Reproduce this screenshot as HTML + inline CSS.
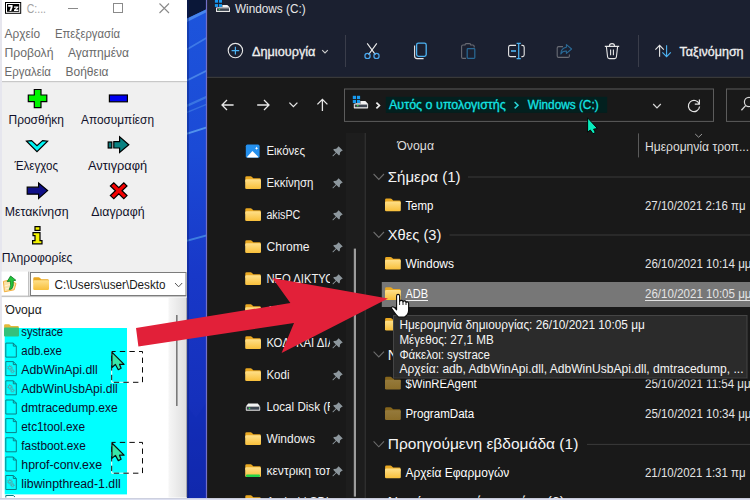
<!DOCTYPE html>
<html lang="el"><head><meta charset="utf-8"><title>7-Zip / Windows (C:)</title>
<style>html,body{margin:0;padding:0;background:#191919;overflow:hidden}svg{display:block}text{font-family:"Liberation Sans",sans-serif;white-space:pre}</style></head><body>
<svg width="750" height="500" viewBox="0 0 750 500">
<defs>
<linearGradient id="fg" x1="0" y1="0" x2="0" y2="1"><stop offset="0" stop-color="#ffe08a"/><stop offset="1" stop-color="#f8bf3a"/></linearGradient>
<linearGradient id="fgd" x1="0" y1="0" x2="0" y2="1"><stop offset="0" stop-color="#957a3c"/><stop offset="1" stop-color="#8c6e2a"/></linearGradient>
<linearGradient id="sbg" x1="0" y1="0" x2="1" y2="0"><stop offset="0" stop-color="#f6f6f6"/><stop offset="1" stop-color="#dedede"/></linearGradient>
<linearGradient id="wall" x1="0" y1="0" x2="0" y2="1"><stop offset="0" stop-color="#1d55dc"/><stop offset="0.3" stop-color="#1b4ad6"/><stop offset="0.55" stop-color="#1838c8"/><stop offset="0.8" stop-color="#1530bc"/><stop offset="1" stop-color="#1226a8"/></linearGradient>
<g id="folder"><path d="M0.3 1.6 Q0.3 0.3 1.6 0.3 L5.6 0.3 Q6.4 0.3 7 0.9 L8.3 2.2 L14.6 2.2 Q15.8 2.2 15.8 3.4 L15.8 6 L0.3 6 Z" fill="#e9a822"/><rect x="0.2" y="3.2" width="15.8" height="9.8" rx="1.3" fill="url(#fg)"/></g>
<g id="folderd"><path d="M0.3 1.6 Q0.3 0.3 1.6 0.3 L5.6 0.3 Q6.4 0.3 7 0.9 L8.3 2.2 L14.6 2.2 Q15.8 2.2 15.8 3.4 L15.8 6 L0.3 6 Z" fill="#85651c"/><rect x="0.2" y="3.2" width="15.8" height="9.8" rx="1.3" fill="url(#fgd)"/></g>
<g id="pin"><path d="M6.2 0.6 L10.4 4.8 L9.2 5.4 L7.6 7 L7.4 9.2 L6.6 10 L4 7.4 L0.8 10.6 L0.2 10.6 L0.2 10 L3.4 6.8 L0.8 4.2 L1.6 3.4 L3.8 3.2 L5.4 1.6 Z" fill="#8d979d"/></g>
<g id="fileico"><path d="M0.5 0.5 L8 0.5 L11 3.5 L11 14.5 L0.5 14.5 Z" fill="#00ffff" stroke="#0a7f86" stroke-width="1"/><path d="M8 0.5 L8 3.5 L11 3.5" fill="none" stroke="#0a7f86" stroke-width="1"/></g>
<g id="dllico"><use href="#fileico"/><circle cx="4.6" cy="6.6" r="1.5" fill="none" stroke="#5f9da2" stroke-width="1"/><circle cx="4.6" cy="6.6" r="2.4" fill="none" stroke="#5f9da2" stroke-width="0.9" stroke-dasharray="0.95 0.93"/><circle cx="7.2" cy="10.2" r="1.1" fill="none" stroke="#5f9da2" stroke-width="0.9"/><circle cx="7.2" cy="10.2" r="1.9" fill="none" stroke="#5f9da2" stroke-width="0.8" stroke-dasharray="0.75 0.74"/></g>
<g id="cur"><path d="M0 0 L0 15.4 L3.5 12.4 L6.4 17.6 L9.2 16.2 L7.6 12.2 L12.2 12.2 Z" fill="#36e6a8" stroke="#07140f" stroke-width="1.2" stroke-linejoin="round"/></g>
</defs>
<rect x="0" y="0" width="750" height="500" fill="#191919"/>
<rect x="186" y="0" width="22" height="500" fill="url(#wall)"/>
<path d="M186 0 L208 0 L208 8.5 L186 19 Z" fill="#0a1738"/><path d="M186 19 L208 8.5 L208 11.5 L186 22.5 Z" fill="#4f8ef0" opacity="0.85"/>
<path d="M186 49 L208 36 L208 38 L186 51 Z" fill="#4d8cec" opacity="0.7"/>
<path d="M186 80 L208 69 L208 71 L186 82 Z" fill="#5a98ee" opacity="0.7"/>
<path d="M186 105 L208 95 L208 97.5 L186 107.5 Z" fill="#4f90ea" opacity="0.6"/>
<path d="M186 112 L208 103 L208 104.5 L186 113.5 Z" fill="#4f90ea" opacity="0.5"/>
<path d="M186 133 L208 126 L208 128 L186 135 Z" fill="#5fa4f0" opacity="0.8"/>
<path d="M186 240 L208 234 L208 236 L186 242 Z" fill="#4f9ae8" opacity="0.7"/>
<path d="M186 405 L196 418 L208 400 L208 500 L186 500 Z" fill="#0f2cb4" opacity="0.35"/>
<rect x="186" y="0" width="3" height="500" fill="#0a1a60" opacity="0.35"/>
<rect x="0" y="0" width="187" height="498.2" fill="#ffffff"/>
<rect x="0" y="82" width="187" height="216" fill="#f0f0f0"/>
<rect x="0" y="81" width="187" height="1.2" fill="#c8c8c8"/>
<rect x="0" y="0" width="2" height="498" fill="#e6e6ee"/>
<rect x="5" y="2" width="16.2" height="11.8" fill="#000"/><rect x="6" y="3" width="14.2" height="9.8" fill="#fff"/><rect x="7" y="4" width="12.2" height="7.8" fill="#000"/>
<path d="M8.2 5 L12.6 5 L12.6 7.2 L11.2 11 L9.4 11 L10.8 6.8 L8.2 6.8 Z" fill="#fff"/>
<path d="M14 6.4 L18.4 6.4 L18.4 7.6 L16 9.6 L18.4 9.6 L18.4 11 L14 11 L14 9.8 L16.4 7.8 L14 7.8 Z" fill="#fff"/>
<text x="26.8" y="12.6" font-size="12" fill="#a2a2a2" textLength="19.2" lengthAdjust="spacingAndGlyphs">C:...</text>
<path d="M68 8.5 L78 8.5" stroke="#8a8a8a" stroke-width="1"/>
<rect x="113.5" y="3.5" width="9" height="9" fill="none" stroke="#8a8a8a" stroke-width="1"/>
<path d="M159.5 3.5 L169 13 M169 3.5 L159.5 13" stroke="#8a8a8a" stroke-width="1.1"/>
<text x="4.5" y="38.2" font-size="12" fill="#6a6a6a" textLength="35.5" lengthAdjust="spacingAndGlyphs">Αρχείο</text>
<text x="55.0" y="38.2" font-size="12" fill="#6a6a6a" textLength="65.0" lengthAdjust="spacingAndGlyphs">Επεξεργασία</text>
<text x="4.5" y="56.5" font-size="12" fill="#6a6a6a" textLength="49.0" lengthAdjust="spacingAndGlyphs">Προβολή</text>
<text x="68.0" y="56.5" font-size="12" fill="#6a6a6a" textLength="61.0" lengthAdjust="spacingAndGlyphs">Αγαπημένα</text>
<text x="4.5" y="75.6" font-size="12" fill="#6a6a6a" textLength="46.5" lengthAdjust="spacingAndGlyphs">Εργαλεία</text>
<text x="65.5" y="75.6" font-size="12" fill="#6a6a6a" textLength="43.0" lengthAdjust="spacingAndGlyphs">Βοήθεια</text>
<path d="M34.3 89.5 L41 89.5 L41 95 L46.8 95 L46.8 101.6 L41 101.6 L41 107.6 L34.3 107.6 L34.3 101.6 L28.3 101.6 L28.3 95 L34.3 95 Z" fill="#00f400" stroke="#000" stroke-width="1.2" stroke-linejoin="miter"/>
<rect x="109.4" y="95" width="18" height="6.8" fill="#0000f0" stroke="#000" stroke-width="1.2" stroke-linejoin="miter"/>
<path d="M26.5 141.2 L31.6 140.6 L37 145.6 L42.6 140.6 L47.6 141.2 L37 151.6 Z" fill="#00f6f6" stroke="#000" stroke-width="1.2" stroke-linejoin="miter"/>
<rect x="108.2" y="142" width="3.6" height="6" fill="#0a7a7a" stroke="#000" stroke-width="1.2" stroke-linejoin="miter"/>
<path d="M113.8 141.6 L119.6 141.6 L119.6 136.8 L128.8 144.8 L119.6 152.4 L119.6 148 L113.8 148 Z" fill="#0a8282" stroke="#000" stroke-width="1.2" stroke-linejoin="miter"/>
<path d="M27.2 187.2 L38.6 187.2 L38.6 183 L47.6 190.6 L38.6 198.4 L38.6 194.2 L27.2 194.2 Z" fill="#101088" stroke="#000" stroke-width="1.2" stroke-linejoin="miter"/>
<path d="M110.4 186 L113.8 182.8 L118.8 187.6 L123.8 182.8 L127 186 L122 190.8 L127 195.6 L123.8 198.6 L118.8 193.8 L113.8 198.6 L110.4 195.6 L115.4 190.8 Z" fill="#f40000" stroke="#000" stroke-width="1.2" stroke-linejoin="miter"/>
<path d="M35 226.6 L40 226.6 L40 230.4 L35 230.4 Z M33 232.6 L40 232.6 L40 240.6 L42 240.6 L42 243.8 L32.6 243.8 L32.6 240.6 L35 240.6 L35 235.6 L33 235.6 Z" fill="#f4f400" stroke="#000" stroke-width="1.2" stroke-linejoin="miter"/>
<text x="8.5" y="124.2" font-size="12.5" fill="#10102a" textLength="55.5" lengthAdjust="spacingAndGlyphs">Προσθήκη</text>
<text x="81.0" y="124.2" font-size="12.5" fill="#10102a" textLength="73.0" lengthAdjust="spacingAndGlyphs">Αποσυμπίεση</text>
<text x="14.5" y="169.6" font-size="12.5" fill="#10102a" textLength="43.5" lengthAdjust="spacingAndGlyphs">Έλεγχος</text>
<text x="88.0" y="169.6" font-size="12.5" fill="#10102a" textLength="59.2" lengthAdjust="spacingAndGlyphs">Αντιγραφή</text>
<text x="4.7" y="216.3" font-size="12.5" fill="#10102a" textLength="64.0" lengthAdjust="spacingAndGlyphs">Μετακίνηση</text>
<text x="91.3" y="216.3" font-size="12.5" fill="#10102a" textLength="53.3" lengthAdjust="spacingAndGlyphs">Διαγραφή</text>
<text x="1.7" y="262.2" font-size="12.5" fill="#10102a" textLength="70.8" lengthAdjust="spacingAndGlyphs">Πληροφορίες</text>
<rect x="1.6" y="271.6" width="27" height="24.6" fill="#ffffff"/><rect x="28.2" y="271.6" width="1" height="25" fill="#b4b4b4"/><rect x="1.6" y="295.6" width="185" height="1.2" fill="#b8b8b8"/>
<path d="M3.4 281.4 L8.6 280.2 L16 283.4 L14.2 289.8 L4.4 291.8 Z" fill="#fbe2a6" stroke="#f0a830" stroke-width="0.9" stroke-linejoin="round"/><path d="M4.6 286 L13 283.6 M5.4 289 L13.6 286.6" stroke="#fff4d8" stroke-width="1"/>
<path d="M9.2 289.6 Q11.4 286 10.4 281.2 L7.2 281.6 L10.6 276 L15.8 280.2 L13.2 280.8 Q14 286.4 11.6 289 Z" fill="#22c43c" stroke="#0c7a20" stroke-width="0.8" stroke-linejoin="round"/>
<rect x="30.5" y="272.5" width="155.5" height="23" fill="#fff" stroke="#7c7c7c" stroke-width="1"/>
<use href="#folder" x="33" y="277"/>
<text x="54.5" y="289.4" font-size="12.5" fill="#1a1a1a" textLength="111.0" lengthAdjust="spacingAndGlyphs">C:\Users\user\Deskto</text>
<path d="M175 283 L178.6 286.8 L182.2 283" fill="none" stroke="#555" stroke-width="1"/>
<rect x="2" y="297.5" width="185" height="200" fill="#ffffff"/>
<rect x="168.5" y="297.5" width="18" height="200" fill="url(#sbg)"/><rect x="186.3" y="297.5" width="0.8" height="200" fill="#8c8c94"/>
<rect x="176" y="315" width="1.6" height="91" fill="#7a7a7a"/>
<text x="5.6" y="314.0" font-size="12.5" fill="#1a1a1a" textLength="36.2" lengthAdjust="spacingAndGlyphs">Όνομα</text>
<rect x="4.7" y="328" width="122.3" height="166.4" fill="#00ffff"/>
<g transform="translate(3.8,324)"><path d="M0.3 1.4 Q0.3 0.3 1.4 0.3 L5.4 0.3 L7.2 2 L14 2 Q15 2 15 3 L15 5 L0.3 5 Z" fill="#e4b83a"/><rect x="0.2" y="3.6" width="15" height="9" rx="1" fill="#34c07c"/></g>
<text x="21.3" y="336.4" font-size="12.5" fill="#0c0c2c" textLength="41.7" lengthAdjust="spacingAndGlyphs">systrace</text>
<text x="21.3" y="355.2" font-size="12.5" fill="#0c0c2c" textLength="40.6" lengthAdjust="spacingAndGlyphs">adb.exe</text>
<use href="#fileico" x="5.3" y="342.6"/>
<text x="21.3" y="373.7" font-size="12.5" fill="#0c0c2c" textLength="76.4" lengthAdjust="spacingAndGlyphs">AdbWinApi.dll</text>
<use href="#dllico" x="5.3" y="361.1"/>
<text x="21.3" y="392.9" font-size="12.5" fill="#0c0c2c" textLength="96.5" lengthAdjust="spacingAndGlyphs">AdbWinUsbApi.dll</text>
<use href="#dllico" x="5.3" y="380.3"/>
<text x="21.3" y="412.1" font-size="12.5" fill="#0c0c2c" textLength="96.5" lengthAdjust="spacingAndGlyphs">dmtracedump.exe</text>
<use href="#fileico" x="5.3" y="399.5"/>
<text x="21.3" y="430.7" font-size="12.5" fill="#0c0c2c" textLength="63.7" lengthAdjust="spacingAndGlyphs">etc1tool.exe</text>
<use href="#fileico" x="5.3" y="418.1"/>
<text x="21.3" y="449.9" font-size="12.5" fill="#0c0c2c" textLength="64.5" lengthAdjust="spacingAndGlyphs">fastboot.exe</text>
<use href="#fileico" x="5.3" y="437.3"/>
<text x="21.3" y="469.1" font-size="12.5" fill="#0c0c2c" textLength="80.7" lengthAdjust="spacingAndGlyphs">hprof-conv.exe</text>
<use href="#fileico" x="5.3" y="456.5"/>
<text x="21.3" y="487.6" font-size="12.5" fill="#0c0c2c" textLength="99.4" lengthAdjust="spacingAndGlyphs">libwinpthread-1.dll</text>
<use href="#dllico" x="5.3" y="475.0"/>
<path d="M5.8 497.5 L5.8 495.5 L13.3 495.5 L15 497" fill="none" stroke="#0a7f86" stroke-width="1"/>
<path d="M111.7 351.5 L111.7 382.3 L142.5 382.3" fill="none" stroke="#ffffff" stroke-width="1"/>
<rect x="111.7" y="351.5" width="30.8" height="30.8" fill="none" stroke="#0a0a0a" stroke-width="1" stroke-dasharray="5.4 4.2" stroke-dashoffset="1.5"/>
<use href="#cur" x="111.9" y="352.1"/>
<path d="M111.7 442.4 L111.7 473.2 L142.5 473.2" fill="none" stroke="#ffffff" stroke-width="1"/>
<rect x="111.7" y="442.4" width="30.8" height="30.8" fill="none" stroke="#0a0a0a" stroke-width="1" stroke-dasharray="5.4 4.2" stroke-dashoffset="1.5"/>
<use href="#cur" x="111.9" y="443.0"/>
<rect x="206" y="0" width="544" height="498" fill="#191919"/>
<rect x="206" y="0" width="544" height="77" fill="#1b2030"/>
<rect x="206" y="76.8" width="544" height="1.1" fill="#3d3d3d"/>
<rect x="205.9" y="0" width="1.2" height="498" fill="#7370c8"/>
<g><rect x="214.9" y="0" width="3.1" height="2.7" fill="#189af0"/><rect x="218.9" y="0" width="3.1" height="2.7" fill="#189af0"/><rect x="214.9" y="4.1" width="3.1" height="2.8" fill="#189af0"/><rect x="218.9" y="4.1" width="3.1" height="2.8" fill="#189af0"/><path d="M222.4 5.1 L227.3 5.1 L230 7.6 L222.4 7.6 Z" fill="#f2f2f2"/><path d="M218.2 7.1 L222.4 7.1 L222.4 7.6 L216 7.6 Z" fill="#f2f2f2"/><rect x="216" y="7.5" width="14" height="4.6" rx="0.6" fill="#e6e6e6"/><rect x="217" y="8.3" width="12" height="2.6" fill="#3c4450"/><rect x="218.8" y="9" width="1.3" height="1.2" fill="#37e04a"/></g>
<text x="235.0" y="13.0" font-size="12.5" fill="#e8e8e8" textLength="70.6" lengthAdjust="spacingAndGlyphs">Windows (C:)</text>
<circle cx="235.4" cy="50.6" r="7.2" fill="none" stroke="#e6e6e6" stroke-width="1.1"/><path d="M231.6 50.6 L239.2 50.6 M235.4 46.8 L235.4 54.4" stroke="#4db4f4" stroke-width="1.2"/>
<text x="252.0" y="56.0" font-size="12.5" fill="#f0f0f0" stroke="#f0f0f0" stroke-width="0.3" textLength="63.4" lengthAdjust="spacingAndGlyphs">Δημιουργία</text>
<path d="M322.2 50.2 L325 53 L327.8 50.2" fill="none" stroke="#cfcfcf" stroke-width="1.1"/>
<rect x="345" y="35" width="1" height="32" fill="#3a3d4a"/>
<rect x="638" y="35" width="1" height="32" fill="#3a3d4a"/>
<path d="M367.2 43.4 L375.4 54.6 M376.8 43.4 L368.6 54.6" stroke="#ececec" stroke-width="1.1" fill="none"/><circle cx="367.5" cy="55.9" r="2.6" fill="none" stroke="#4aa8f0" stroke-width="1.2"/><circle cx="376.5" cy="55.9" r="2.6" fill="none" stroke="#4aa8f0" stroke-width="1.2"/>
<path d="M414.6 45.6 L414.6 56 Q414.6 58.6 417.2 58.6 L423.6 58.6" fill="none" stroke="#e6e6e6" stroke-width="1.1"/><rect x="416.6" y="43.2" width="9.6" height="13.2" rx="1.8" fill="none" stroke="#4db4f4" stroke-width="1.3"/>
<path d="M466 58.4 L463 58.4 Q461.6 58.4 461.6 57 L461.6 46.4 Q461.6 45 463 45 L465 45 Q465 43.6 466.4 43.6 L469.4 43.6 Q470.8 43.6 470.8 45 L472.8 45 Q474.2 45 474.2 46.4 L474.2 47.6" fill="none" stroke="#6a6c74" stroke-width="1.1"/><rect x="467.2" y="48.6" width="7.6" height="9.8" rx="0.8" fill="none" stroke="#2a6a96" stroke-width="1.2"/>
<path d="M516 45.4 L510.4 45.4 Q508.6 45.4 508.6 47.2 L508.6 54.8 Q508.6 56.6 510.4 56.6 L516 56.6 M521.4 45.4 L522.4 45.4 Q524.2 45.4 524.2 47.2 L524.2 54.8 Q524.2 56.6 522.4 56.6 L521.4 56.6" fill="none" stroke="#e6e6e6" stroke-width="1.1"/><path d="M518.7 43.6 L518.7 58.4 M516.6 43.4 L520.8 43.4 M516.6 58.6 L520.8 58.6" stroke="#4db4f4" stroke-width="1.2"/><path d="M511 51 L516 51" stroke="#4db4f4" stroke-width="1.6"/>
<path d="M563 46.6 L558.6 46.6 Q557.2 46.6 557.2 48 L557.2 56 Q557.2 57.4 558.6 57.4 L568 57.4 Q569.4 57.4 569.4 56 L569.4 54.4" fill="none" stroke="#6a6c74" stroke-width="1.1"/><path d="M566.4 44.6 L571.6 49 L566.4 53.4 L566.4 51 Q562.4 50.8 560.8 54 Q561 48 566.4 47.2 Z" fill="none" stroke="#2a6a96" stroke-width="1.1" stroke-linejoin="round"/>
<path d="M604.8 46.4 L619.2 46.4 M609.4 46.2 Q609.4 43.6 612 43.6 Q614.6 43.6 614.6 46.2 M606.4 46.6 L607.6 57 Q607.8 58.6 609.4 58.6 L614.6 58.6 Q616.2 58.6 616.4 57 L617.6 46.6 M610.6 49.6 L610.6 55.2 M613.4 49.6 L613.4 55.2" fill="none" stroke="#e6e6e6" stroke-width="1.1"/>
<path d="M659.6 56.8 L659.6 45.6 M655.4 49.6 L659.6 45.4 L663.8 49.6" fill="none" stroke="#e6e6e6" stroke-width="1.1"/><path d="M666.6 45.2 L666.6 56.4 M662.4 52.4 L666.6 56.6 L670.8 52.4" fill="none" stroke="#4db4f4" stroke-width="1.1"/>
<text x="679.6" y="56.0" font-size="12.5" fill="#f0f0f0" stroke="#f0f0f0" stroke-width="0.3" textLength="64.0" lengthAdjust="spacingAndGlyphs">Ταξινόμηση</text>
<path d="M233.6 105 L222 105 M227 100 L222 105 L227 110" fill="none" stroke="#e8e8e8" stroke-width="1.3"/>
<path d="M257.2 105 L269 105 M264 100 L269 105 L264 110" fill="none" stroke="#e8e8e8" stroke-width="1.3"/>
<path d="M289.4 102.6 L293.4 106.6 L297.4 102.6" fill="none" stroke="#e8e8e8" stroke-width="1.3"/>
<path d="M322.4 111 L322.4 99.4 M317.4 104.4 L322.4 99.4 L327.4 104.4" fill="none" stroke="#e8e8e8" stroke-width="1.3"/>
<rect x="344.5" y="89" width="369" height="32.4" fill="#191919" stroke="#5c5c5c" stroke-width="1"/>
<rect x="726.5" y="89" width="30" height="32.4" fill="#191919" stroke="#5c5c5c" stroke-width="1"/>
<g><rect x="352.8" y="95.8" width="3.2" height="3.2" fill="#189af0"/><rect x="356.9" y="95.8" width="3.2" height="3.2" fill="#189af0"/><rect x="352.8" y="99.9" width="3.2" height="3.2" fill="#189af0"/><rect x="356.9" y="99.9" width="3.2" height="3.2" fill="#189af0"/><path d="M360.4 100.9 L365.4 100.9 L368.1 104 L360.4 104 Z" fill="#f2f2f2"/><path d="M356.2 103.3 L360.4 103.3 L360.4 104 L353.8 104 Z" fill="#f2f2f2"/><rect x="353.8" y="103.9" width="14.3" height="4.5" rx="0.6" fill="#e6e6e6"/><rect x="354.8" y="104.6" width="12.3" height="2.6" fill="#3c4450"/><rect x="357" y="105" width="1.4" height="1.3" fill="#37e04a"/></g>
<path d="M376.4 102.6 L379.4 105.5 L376.4 108.4" fill="none" stroke="#f0f0f0" stroke-width="1.7"/>
<rect x="385.8" y="96.8" width="221.4" height="16" fill="#02201f"/>
<text x="389.0" y="109.4" font-size="12.5" fill="#14e4e4" stroke="#14e4e4" stroke-width="0.3" textLength="116.8" lengthAdjust="spacingAndGlyphs">Αυτός ο υπολογιστής</text>
<path d="M514.6 102 L518 105.2 L514.6 108.4" fill="none" stroke="#28d6d8" stroke-width="1.5"/>
<text x="527.8" y="109.4" font-size="12.5" fill="#14e4e4" stroke="#14e4e4" stroke-width="0.3" textLength="70.8" lengthAdjust="spacingAndGlyphs">Windows (C:)</text>
<path d="M653.2 104 L657 107.8 L660.8 104" fill="none" stroke="#d8d8d8" stroke-width="1.2"/>
<path d="M699.58 106.49 A5.6 5.6 0 1 1 699.19 103.90" fill="none" stroke="#e4e4e4" stroke-width="1.2"/><path d="M699.4 99.6 L699.4 104.2 L694.8 104.2" fill="none" stroke="#e4e4e4" stroke-width="1.2"/>
<circle cx="749" cy="102" r="4.6" fill="none" stroke="#d8d8d8" stroke-width="1.2"/><path d="M745.6 105.6 L741.4 110.2" stroke="#d8d8d8" stroke-width="1.3"/>
<rect x="346" y="133" width="19" height="365" fill="#1d1d1d"/>
<rect x="364.6" y="133" width="1.4" height="365" fill="#2e2e2e"/>
<rect x="353.8" y="248.6" width="2.2" height="248" fill="#9c9c9c"/>
<clipPath id="sclip"><rect x="207" y="133" width="123" height="365"/></clipPath>
<g clip-path="url(#sclip)">
<text x="266.4" y="155.4" font-size="12.5" fill="#f2f2f2" textLength="38.6" lengthAdjust="spacingAndGlyphs">Εικόνες</text>
<text x="266.4" y="187.4" font-size="12.5" fill="#f2f2f2" textLength="47.0" lengthAdjust="spacingAndGlyphs">Εκκίνηση</text>
<text x="266.4" y="219.4" font-size="12.5" fill="#f2f2f2" textLength="33.9" lengthAdjust="spacingAndGlyphs">akisPC</text>
<text x="266.4" y="251.4" font-size="12.5" fill="#f2f2f2" textLength="43.2" lengthAdjust="spacingAndGlyphs">Chrome</text>
<text x="266.4" y="283.4" font-size="12.5" fill="#f2f2f2" textLength="67.5" lengthAdjust="spacingAndGlyphs">ΝΕΟ ΔΙΚΤΥΟ</text>
<text x="266.4" y="315.4" font-size="12.5" fill="#f2f2f2" textLength="35.9" lengthAdjust="spacingAndGlyphs">Λήψεις</text>
<text x="266.4" y="347.4" font-size="12.5" fill="#f2f2f2" textLength="100.4" lengthAdjust="spacingAndGlyphs">ΚΟΔΙ ΚΑΙ ΔΙΑΦΟΡΑ</text>
<text x="266.4" y="379.4" font-size="12.5" fill="#f2f2f2" textLength="23.1" lengthAdjust="spacingAndGlyphs">Kodi</text>
<text x="266.4" y="411.4" font-size="12.5" fill="#f2f2f2" textLength="74.9" lengthAdjust="spacingAndGlyphs">Local Disk (F:)</text>
<text x="266.4" y="443.4" font-size="12.5" fill="#f2f2f2" textLength="48.6" lengthAdjust="spacingAndGlyphs">Windows</text>
<text x="266.4" y="475.4" font-size="12.5" fill="#f2f2f2" textLength="103.5" lengthAdjust="spacingAndGlyphs">κεντρικη τοποθεσια</text>
<text x="266.4" y="506.4" font-size="12.5" fill="#f2f2f2" textLength="67.2" lengthAdjust="spacingAndGlyphs">Android SDK</text>
</g>
<g transform="translate(245,144)"><rect x="0.8" y="0.6" width="13.8" height="13.2" rx="1.6" fill="#2490ee"/><path d="M2 13 L7.4 7 L13.4 13 Q13.4 13.4 12.8 13.4 L2.6 13.4 Q2 13.4 2 13 Z" fill="#fff"/><path d="M11.6 2.4 L12.1 3.7 L13.4 4.2 L12.1 4.7 L11.6 6 L11.1 4.7 L9.8 4.2 L11.1 3.7 Z" fill="#fff"/></g>
<use href="#pin" x="332.4" y="145.6"/>
<use href="#folder" x="245" y="176"/>
<use href="#pin" x="332.4" y="177.6"/>
<use href="#folder" x="245" y="208"/>
<use href="#pin" x="332.4" y="209.6"/>
<use href="#folder" x="245" y="240"/>
<use href="#pin" x="332.4" y="241.6"/>
<use href="#folder" x="245" y="272"/>
<use href="#pin" x="332.4" y="273.6"/>
<use href="#folder" x="245" y="304"/>
<use href="#pin" x="332.4" y="305.6"/>
<use href="#folder" x="245" y="336"/>
<use href="#pin" x="332.4" y="337.6"/>
<use href="#folder" x="245" y="368"/>
<use href="#pin" x="332.4" y="369.6"/>
<g transform="translate(245.8,403.4)"><path d="M2.4 0 L12 0 L14.4 3.2 L0 3.2 Z" fill="#f2f2f2"/><rect x="0" y="3" width="14.4" height="4.4" rx="0.7" fill="#e4e4e4"/><rect x="0.9" y="3.6" width="12.6" height="2.7" fill="#3c4450"/><rect x="3" y="4.3" width="1.4" height="1.3" fill="#37e04a"/></g>
<use href="#pin" x="332.4" y="401.6"/>
<use href="#folder" x="245" y="432"/>
<use href="#pin" x="332.4" y="433.6"/>
<use href="#folder" x="245" y="464"/>
<rect x="246" y="474.4" width="14" height="2.6" rx="1" fill="#22d24a"/>
<use href="#pin" x="332.4" y="465.6"/>
<use href="#folder" x="245" y="495"/>
<rect x="638" y="133.4" width="1" height="24" fill="#5a5a5a"/>
<path d="M695.2 134 L698.6 137.2 L702 134" fill="none" stroke="#9a9a9a" stroke-width="1"/>
<text x="397.3" y="150.3" font-size="12.5" fill="#dedede" textLength="36.7" lengthAdjust="spacingAndGlyphs">Όνομα</text>
<text x="645.0" y="150.5" font-size="12.5" fill="#dedede" textLength="104.0" lengthAdjust="spacingAndGlyphs">Ημερομηνία τροπ...</text>
<path d="M373.6 174.0 L378.8 179.4 L384 174.0" fill="none" stroke="#6c6c6c" stroke-width="1.1"/>
<text x="387.8" y="182.0" font-size="15.4" fill="#f4f4f4" textLength="72.7" lengthAdjust="spacingAndGlyphs">Σήμερα (1)</text>
<rect x="468" y="176.5" width="282" height="1" fill="#3a3a3a"/>
<use href="#folder" x="384.8" y="198.2"/>
<text x="405.4" y="209.6" font-size="12.5" fill="#ffffff" textLength="28.0" lengthAdjust="spacingAndGlyphs">Temp</text>
<text x="645.0" y="209.6" font-size="12.5" fill="#e4e4e4" textLength="100.5" lengthAdjust="spacingAndGlyphs">27/10/2021 2:16 πμ</text>
<path d="M373.6 232.0 L378.8 237.4 L384 232.0" fill="none" stroke="#6c6c6c" stroke-width="1.1"/>
<text x="387.8" y="240.0" font-size="15.4" fill="#f4f4f4" textLength="53.5" lengthAdjust="spacingAndGlyphs">Χθες (3)</text>
<rect x="449.5" y="234.5" width="300.5" height="1" fill="#3a3a3a"/>
<use href="#folder" x="384.8" y="256.6"/>
<text x="405.4" y="268.0" font-size="12.5" fill="#ffffff" textLength="48.6" lengthAdjust="spacingAndGlyphs">Windows</text>
<text x="645.0" y="268.0" font-size="12.5" fill="#e4e4e4" textLength="106.5" lengthAdjust="spacingAndGlyphs">26/10/2021 10:14 μμ</text>
<rect x="381.8" y="282" width="369" height="25" fill="#777777"/>
<use href="#folder" x="384.8" y="286.9"/>
<text x="405.4" y="298.3" font-size="12.5" fill="#ffffff" textLength="22.6" lengthAdjust="spacingAndGlyphs">ADB</text>
<text x="645.0" y="298.3" font-size="12.5" fill="#e4e4e4" textLength="106.5" lengthAdjust="spacingAndGlyphs">26/10/2021 10:05 μμ</text>
<rect x="405.4" y="300" width="22.6" height="1" fill="#f2f2f2"/><rect x="645" y="300" width="106" height="1" fill="#e4e4e4"/>
<use href="#folder" x="384.8" y="317.6"/>
<text x="405.4" y="329.0" font-size="12.5" fill="#ffffff" textLength="75.7" lengthAdjust="spacingAndGlyphs">platform-tools</text>
<text x="645.0" y="329.0" font-size="12.5" fill="#e4e4e4" textLength="100.1" lengthAdjust="spacingAndGlyphs">26/10/2021 9:58 μμ</text>
<path d="M373.6 351.6 L378.8 357.0 L384 351.6" fill="none" stroke="#6c6c6c" stroke-width="1.1"/>
<text x="387.8" y="359.6" font-size="15.4" fill="#f4f4f4" textLength="215.8" lengthAdjust="spacingAndGlyphs">Νωρίτερα αυτήν την εβδομάδα (2)</text>
<use href="#folderd" x="384.8" y="376.5"/>
<text x="405.4" y="387.9" font-size="12.5" fill="#ffffff" textLength="71.3" lengthAdjust="spacingAndGlyphs">$WinREAgent</text>
<text x="645.0" y="387.9" font-size="12.5" fill="#e4e4e4" textLength="105.7" lengthAdjust="spacingAndGlyphs">25/10/2021 11:54 μμ</text>
<use href="#folderd" x="384.8" y="407.0"/>
<text x="405.4" y="418.4" font-size="12.5" fill="#ffffff" textLength="68.9" lengthAdjust="spacingAndGlyphs">ProgramData</text>
<text x="645.0" y="418.4" font-size="12.5" fill="#e4e4e4" textLength="106.5" lengthAdjust="spacingAndGlyphs">25/10/2021 10:34 μμ</text>
<path d="M373.6 441.4 L378.8 446.8 L384 441.4" fill="none" stroke="#6c6c6c" stroke-width="1.1"/>
<text x="387.8" y="449.4" font-size="15.4" fill="#f4f4f4" textLength="190.5" lengthAdjust="spacingAndGlyphs">Προηγούμενη εβδομάδα (1)</text>
<rect x="587" y="443.9" width="163" height="1" fill="#3a3a3a"/>
<use href="#folder" x="384.8" y="465.3"/>
<text x="405.4" y="476.7" font-size="12.5" fill="#ffffff" textLength="103.9" lengthAdjust="spacingAndGlyphs">Αρχεία Εφαρμογών</text>
<text x="645.0" y="476.7" font-size="12.5" fill="#e4e4e4" textLength="100.5" lengthAdjust="spacingAndGlyphs">21/10/2021 1:31 πμ</text>
<path d="M373.6 498.8 L378.8 504.2 L384 498.8" fill="none" stroke="#6c6c6c" stroke-width="1.1"/>
<text x="387.8" y="506.8" font-size="15.4" fill="#f4f4f4" textLength="176.7" lengthAdjust="spacingAndGlyphs">Νωρίτερα αυτόν το μήνα (6)</text>
<rect x="393.5" y="315.5" width="353.5" height="62.6" fill="#2b2b2b" stroke="#454545" stroke-width="1"/><rect x="394" y="378.6" width="353" height="1.2" fill="#101010" opacity="0.7"/>
<text x="399.4" y="329.0" font-size="12.5" fill="#f6f6f6" textLength="245.5" lengthAdjust="spacingAndGlyphs">Ημερομηνία δημιουργίας: 26/10/2021 10:05 μμ</text>
<text x="399.4" y="343.8" font-size="12.5" fill="#f6f6f6" textLength="94.3" lengthAdjust="spacingAndGlyphs">Μέγεθος: 27,1 MB</text>
<text x="399.4" y="358.6" font-size="12.5" fill="#f6f6f6" textLength="90.6" lengthAdjust="spacingAndGlyphs">Φάκελοι: systrace</text>
<text x="399.4" y="373.2" font-size="12.5" fill="#f6f6f6" textLength="344.2" lengthAdjust="spacingAndGlyphs">Αρχεία: adb, AdbWinApi.dll, AdbWinUsbApi.dll, dmtracedump, ...</text>
<path d="M136 328 L290.4 303 L272.4 278 L388 298.6 L281.6 353 L294 323 L138.4 346.6 Z" fill="#e22039"/>
<path d="M396.6 296 Q396.6 294.4 398.1 294.4 Q399.6 294.4 399.6 296 L399.6 301.6 Q399.8 300.4 401.3 300.4 Q403 300.4 403 302 Q403.2 300.9 404.5 300.9 Q406 300.9 406 302.6 Q406.3 301.8 407.3 301.9 Q408.6 302 408.6 303.6 L408.6 310.5 Q408.4 314.6 404.6 317 L398.4 317 Q396 315 391.9 308.8 Q391 307.3 392.4 306.8 Q393.8 306.5 396.6 309.8 Z" fill="#ffffff" stroke="#0c0c0c" stroke-width="1.1" stroke-linejoin="round"/><path d="M399.6 301.6 L399.6 305 M403 302 L403 305 M406 302.6 L406 305" stroke="#0c0c0c" stroke-width="0.9" fill="none"/>
<path d="M587.6 117.8 L587.6 132.2 L590.3 130 L593 133.8 L595.3 132.4 L593.6 129.2 L597.4 128.5 Z" fill="#08ecbc" stroke="#050807" stroke-width="1" stroke-linejoin="round"/>
<rect x="0" y="498.1" width="750" height="1.9" fill="#dcdff0"/>
</svg></body></html>
